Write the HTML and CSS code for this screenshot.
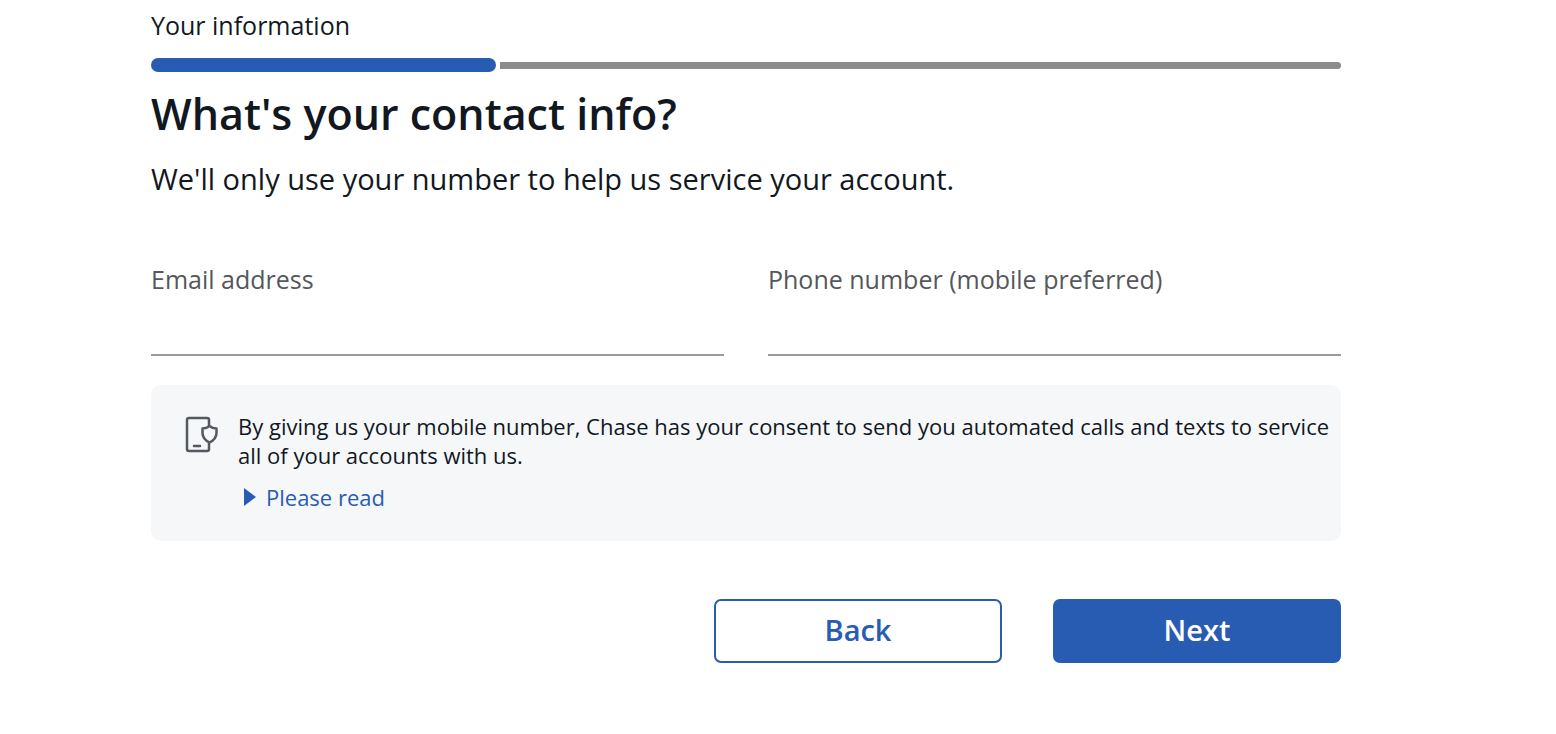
FILE: index.html
```
<!DOCTYPE html>
<html lang="en">
<head>
  <meta charset="utf-8">
  <meta name="viewport" content="width=device-width, initial-scale=1">
  <title>Your information</title>
  <link rel="stylesheet" href="styles.css">
</head>
<body>
  <main class="container">
    <p class="step">Your information</p>
    <div class="progress">
      <div class="progress-done"></div>
      <div class="progress-left"></div>
    </div>

    <h1>What's your contact info?</h1>
    <p class="intro">We'll only use your number to help us service your account.</p>

    <form>
      <div class="fields">
        <div class="field">
          <label for="email">Email address</label>
          <input type="email" id="email">
        </div>
        <div class="field">
          <label for="phone">Phone number (mobile preferred)</label>
          <input type="tel" id="phone">
        </div>
      </div>

      <div class="notice">
        <svg class="notice-icon" width="34" height="38" viewBox="0 0 34 38" fill="none" stroke="#55585e" stroke-width="2.5" stroke-linecap="round" stroke-linejoin="round" aria-hidden="true">
          <path d="M24 9V4Q24 2 22 2H4Q2 2 2 4V33Q2 35 4 35H22Q24 35 24 33V27"/>
          <path d="M9 30H15"/>
          <path d="M24.500 10Q21.500 12.500 17.500 12.500V17Q17.500 23 24.500 26.500Q31.500 23 31.500 17V12.500Q27.500 12.500 24.500 10Z"/>
        </svg>
        <div class="notice-body">
          <p>By giving us your mobile number, Chase has your consent to send you automated calls and texts to service all of your accounts with us.</p>
          <a class="read-link" href="#">
            <svg width="12" height="20" viewBox="0 0 12 20" aria-hidden="true"><path d="M0 0L12 9L0 18Z" fill="#285cb2"/></svg>
            Please read
          </a>
        </div>
      </div>

      <div class="buttons">
        <button type="button" class="btn btn-back">Back</button>
        <button type="submit" class="btn btn-next">Next</button>
      </div>
    </form>
  </main>
</body>
</html>
```

FILE: styles.css
```
* {
  box-sizing: border-box;
}
body {
  margin: 0;
  background-color: #fff;
  color: #12181f;
  font-family: "Open Sans", "Noto Sans", sans-serif;
}
p, h1 {
  margin: 0;
}
.container {
  padding: 8px 215px 40px 151px;
}
.step {
  font-size: 25px;
  line-height: 34px;
}
.progress {
  display: flex;
  align-items: center;
  gap: 4px;
  margin: 16px 0;
}
.progress-done {
  width: 29%;
  height: 14px;
  border-radius: 7px;
  background-color: #285cb2;
}
.progress-left {
  flex: 1;
  height: 7px;
  border-radius: 0 4px 4px 0;
  background-color: #8c8c8c;
}
h1 {
  font-size: 43px;
  font-weight: 600;
  line-height: 52px;
}
.intro {
  margin-top: 19px;
  font-size: 29px;
  line-height: 40px;
}
.fields {
  display: flex;
  gap: 44px;
  margin-top: 64px;
}
.field {
  flex: 1;
}
.field label {
  display: block;
  color: #54575c;
  font-size: 25px;
  line-height: 32px;
}
.field input {
  display: block;
  width: 100%;
  height: 61px;
  padding: 8px 0;
  border: none;
  border-bottom: 2px solid #999;
  background-color: transparent;
  color: inherit;
  font: inherit;
  font-size: 25px;
}
.notice {
  display: flex;
  align-items: flex-start;
  gap: 19px;
  margin-top: 29px;
  padding: 27px 10px 27px 34px;
  border-radius: 10px;
  background-color: #f5f7f9;
}
.notice-icon {
  flex: none;
  margin-top: 4px;
}
.notice-body {
  flex: 1;
  font-size: 22px;
  line-height: 29px;
}
.read-link {
  display: inline-flex;
  align-items: center;
  gap: 10px;
  margin: 13px 0 0 6px;
  color: #285cb2;
  text-decoration: none;
}
.buttons {
  display: flex;
  justify-content: flex-end;
  gap: 51px;
  margin-top: 58px;
}
.btn {
  width: 288px;
  height: 64px;
  padding: 0 0 2px;
  border: 2px solid #285cb2;
  border-radius: 7px;
  font-family: inherit;
  font-size: 29px;
  font-weight: 600;
  cursor: pointer;
}
.btn-back {
  background-color: #fff;
  color: #285cb2;
}
.btn-next {
  background-color: #285cb2;
  color: #fff;
}
```
